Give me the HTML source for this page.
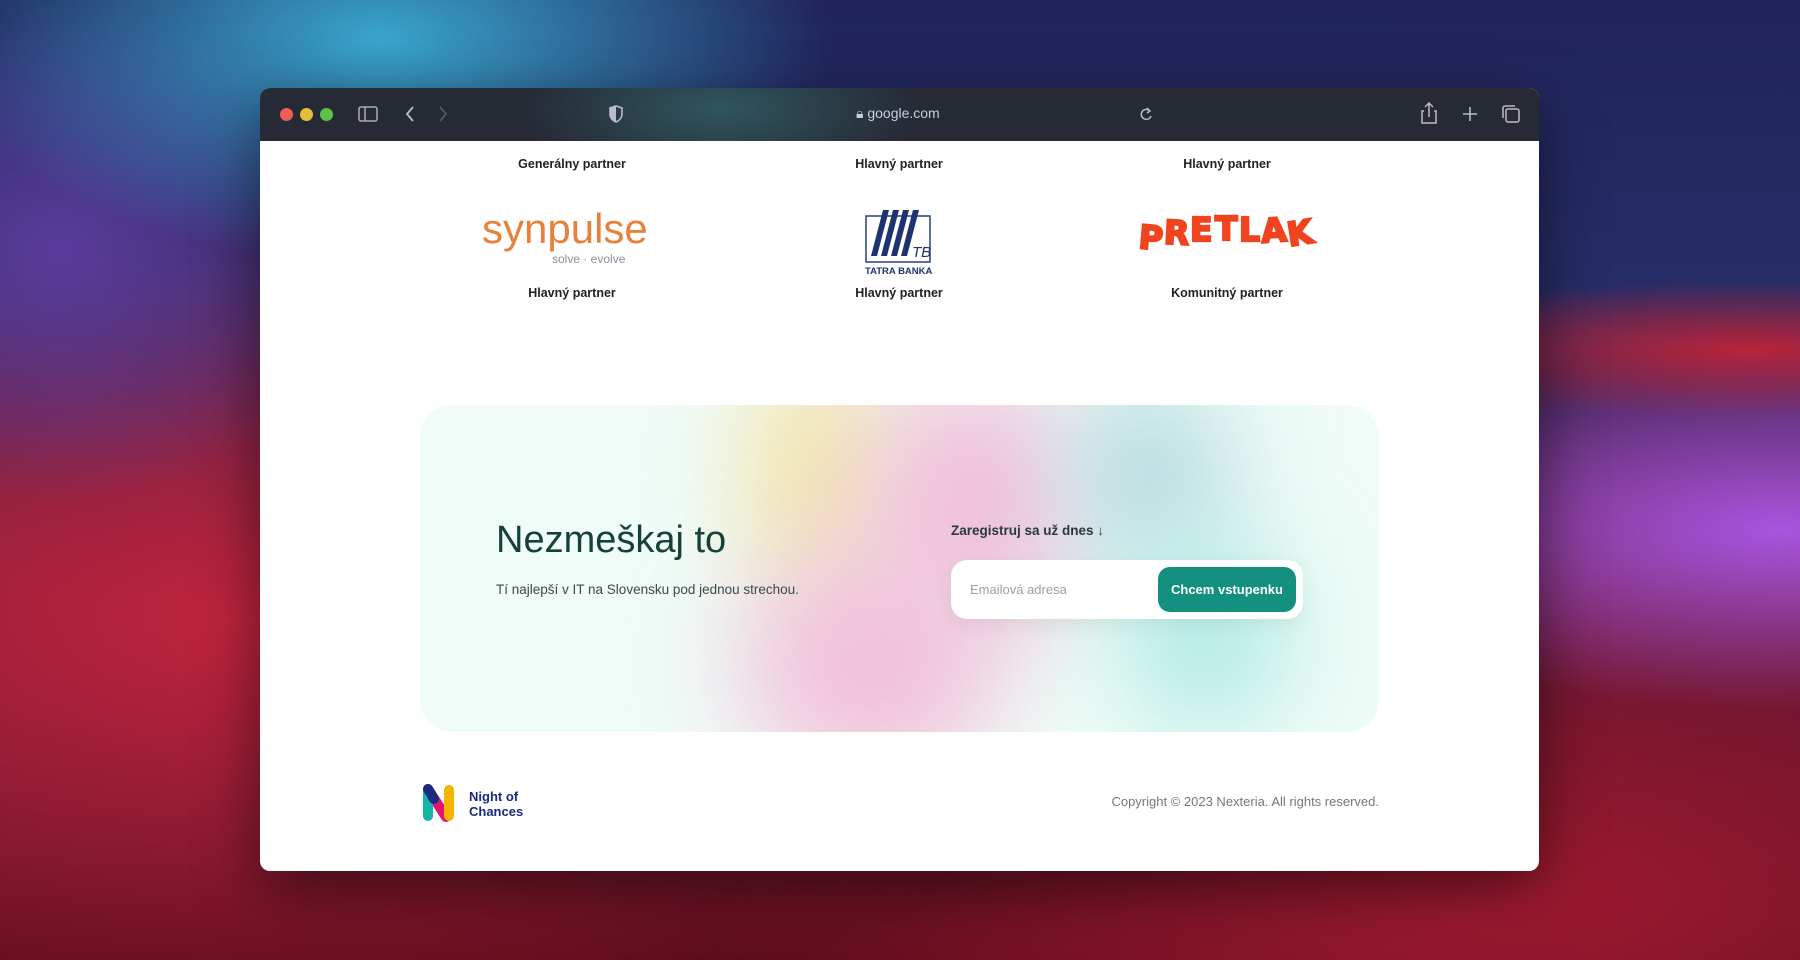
<!DOCTYPE html>
<html><head><meta charset="utf-8"><style>
*{margin:0;padding:0;box-sizing:border-box}
body{width:1800px;height:960px;overflow:hidden;position:relative;font-family:"Liberation Sans",sans-serif;
background:
radial-gradient(ellipse 450px 220px at 380px 40px,#39a6cc 0%,rgba(58,160,200,0) 100%),
radial-gradient(ellipse 420px 70px at 1750px 350px,#b8243a 0%,rgba(180,30,50,0) 100%),
radial-gradient(ellipse 500px 180px at 1780px 530px,#a955e0 0%,rgba(170,80,220,0) 100%),
radial-gradient(ellipse 300px 250px at 60px 250px,#5a3c9c 0%,rgba(90,60,150,0) 100%),
radial-gradient(ellipse 900px 420px at 250px 620px,#c0243c 0%,rgba(180,30,50,0) 100%),
radial-gradient(ellipse 800px 300px at 1500px 900px,#a01a30 0%,rgba(160,20,40,0) 100%),
linear-gradient(180deg,#20245a 0%,#262c66 30%,#6a1a3a 62%,#5a0c1c 100%);}
.win{position:absolute;left:260px;top:88px;width:1279px;height:783px;background:#fff;border-radius:10px;overflow:hidden;box-shadow:0 20px 60px rgba(0,0,0,.5)}
.bar{height:53px;background:radial-gradient(ellipse 200px 80px at 460px 20px,#2f5560 0%,rgba(40,60,70,0) 100%),#262a35;position:relative;color:#ccd}
.dot{position:absolute;top:20px;width:13px;height:13px;border-radius:50%}
.t{font-size:12.5px;font-weight:bold;color:#222;position:absolute;transform:translateX(-50%);white-space:nowrap}
.card{position:absolute;left:160px;top:317px;width:959px;height:327px;border-radius:32px;overflow:hidden;background:#effcf8}
.blob{position:absolute;border-radius:50%;filter:blur(50px)}
</style></head><body>
<div class="win">
<div class="bar">
<div class="dot" style="left:20px;background:#ec5f57"></div>
<div class="dot" style="left:40px;background:#e6bd3a"></div>
<div class="dot" style="left:60px;background:#5fc248"></div>
<svg style="position:absolute;left:98px;top:18px" width="20" height="16" viewBox="0 0 20 16"><rect x="1" y="1" width="18" height="14" rx="2" fill="none" stroke="#aab" stroke-width="1.5"/><line x1="7" y1="1" x2="7" y2="15" stroke="#aab" stroke-width="1.5"/></svg>
<svg style="position:absolute;left:145px;top:18px" width="10" height="16"><path d="M8 1 L2 8 L8 15" fill="none" stroke="#bbc" stroke-width="1.8"/></svg>
<svg style="position:absolute;left:178px;top:18px" width="10" height="16"><path d="M2 1 L8 8 L2 15" fill="none" stroke="#556" stroke-width="1.8"/></svg>
<svg style="position:absolute;left:348px;top:17px" width="16" height="18"><path d="M8 1 L14 3 V9 C14 13 11 16 8 17 C5 16 2 13 2 9 V3 Z" fill="none" stroke="#bbc" stroke-width="1.6"/><path d="M8 1 V17 C5 16 2 13 2 9 V3Z" fill="#bbc"/></svg>
<div style="position:absolute;left:596px;top:17px;font-size:14px;color:#ccd">&#128274;&#xFE0E; google.com</div>
<svg style="position:absolute;left:879px;top:18px" width="14" height="16"><path d="M11 5 A5 5 0 1 0 12 10" fill="none" stroke="#bbc" stroke-width="1.5"/><path d="M8 2 L11 5 L8 7" fill="none" stroke="#bbc" stroke-width="1.5"/></svg>
<svg style="position:absolute;left:1161px;top:14px" width="16" height="22"><path d="M3 9 H1 V21 H15 V9 H13 M8 15 V2 M4 5 L8 1 L12 5" fill="none" stroke="#bbc" stroke-width="1.5"/></svg>
<svg style="position:absolute;left:1202px;top:18px" width="16" height="16"><path d="M8 1 V15 M1 8 H15" stroke="#bbc" stroke-width="1.6"/></svg>
<svg style="position:absolute;left:1241px;top:16px" width="20" height="20"><rect x="5" y="5" width="13" height="13" rx="2" fill="none" stroke="#bbc" stroke-width="1.5"/><path d="M2 14 V4 A2 2 0 0 1 4 2 H14" fill="none" stroke="#bbc" stroke-width="1.5"/></svg>
</div>
<div class="t" style="left:312px;top:69px">Generálny partner</div>
<div class="t" style="left:639px;top:69px">Hlavný partner</div>
<div class="t" style="left:967px;top:69px">Hlavný partner</div>
<div style="position:absolute;left:222px;top:119px;font-size:42px;color:#e8823a;line-height:44px">synpulse</div>
<div style="position:absolute;left:292px;top:164px;font-size:12px;color:#8a8f99">solve · evolve</div>
<svg style="position:absolute;left:605px;top:118px" width="70" height="70" viewBox="0 0 70 70"><rect x="1" y="10" width="64" height="46" fill="#fff" stroke="#2a3f80" stroke-width="1.5"/><path d="M6 50 L18 4 H24 L12 50Z M16 50 L28 4 H34 L22 50Z M26 50 L38 4 H44 L32 50Z M36 50 L48 4 H54 L42 50Z" fill="#1f3370"/><text x="47" y="51" font-size="15" font-style="italic" font-family="Liberation Sans" fill="#1f3370">TB</text><text x="0" y="68" font-size="9.5" font-weight="bold" font-family="Liberation Sans" fill="#1f3370">TATRA BANKA</text></svg>
<svg style="position:absolute;left:877px;top:118px" width="190" height="54" viewBox="0 0 190 54" font-family="DejaVu Sans" font-weight="bold" font-size="33" fill="#f0441e" stroke="#f0441e" stroke-width="2.2">
<text x="2" y="43" transform="rotate(5 12 30)">P</text>
<text x="27" y="38" transform="rotate(3 37 26)">R</text>
<text x="53" y="35">E</text>
<text x="78" y="34">T</text>
<text x="102" y="35">L</text>
<text x="124" y="36" transform="rotate(-4 134 24)">A</text>
<text x="150" y="39" transform="rotate(-9 160 26)">K</text>
</svg>
<div class="t" style="left:312px;top:198px">Hlavný partner</div>
<div class="t" style="left:639px;top:198px">Hlavný partner</div>
<div class="t" style="left:967px;top:198px">Komunitný partner</div>
<div class="card">
<div class="blob" style="left:320px;top:-60px;width:160px;height:260px;background:#f3e6b0"></div>
<div class="blob" style="left:320px;top:140px;width:260px;height:240px;background:#f1c3da"></div>
<div class="blob" style="left:440px;top:-30px;width:220px;height:260px;background:#f0c2da"></div>
<div class="blob" style="left:650px;top:-30px;width:160px;height:200px;background:#b8dde0"></div>
<div class="blob" style="left:700px;top:130px;width:170px;height:200px;background:#b3ebe3"></div>
<div style="position:absolute;left:76px;top:114px;font-size:38px;color:#16403a">Nezmeškaj to</div>
<div style="position:absolute;left:76px;top:177px;font-size:13.5px;color:#3a4a48">Tí najlepší v IT na Slovensku pod jednou strechou.</div>
<div style="position:absolute;left:531px;top:118px;font-size:13.5px;font-weight:bold;color:#2a3a3a">Zaregistruj sa už dnes ↓</div>
<div style="position:absolute;left:531px;top:155px;width:352px;height:59px;background:#fff;border-radius:16px;box-shadow:0 6px 20px rgba(0,0,0,.06)">
<div style="position:absolute;left:19px;top:22px;font-size:13px;color:#9aa0aa">Emailová adresa</div>
<div style="position:absolute;left:207px;top:7px;width:138px;height:45px;background:#13907f;border-radius:12px;color:#fff;font-size:13px;font-weight:bold;text-align:center;line-height:45px">Chcem vstupenku</div>
</div>
</div>
<svg style="position:absolute;left:160px;top:696px" width="40" height="38" viewBox="0 0 40 38"><path d="M8 5 L26 33" stroke="#e0156e" stroke-width="10" stroke-linecap="round"/><path d="M8 6 V32" stroke="#15b5a8" stroke-width="10" stroke-linecap="round"/><path d="M29 6 V32" stroke="#f5b400" stroke-width="10" stroke-linecap="round"/><path d="M8 5 L14 15" stroke="#1a2a80" stroke-width="10" stroke-linecap="round"/></svg>
<div style="position:absolute;left:209px;top:701px;font-size:13px;font-weight:bold;color:#1a2a80;line-height:15px">Night of<br>Chances</div>
<div style="position:absolute;right:160px;top:706px;font-size:13px;color:#777">Copyright © 2023 Nexteria. All rights reserved.</div>
</div>
</body></html>
